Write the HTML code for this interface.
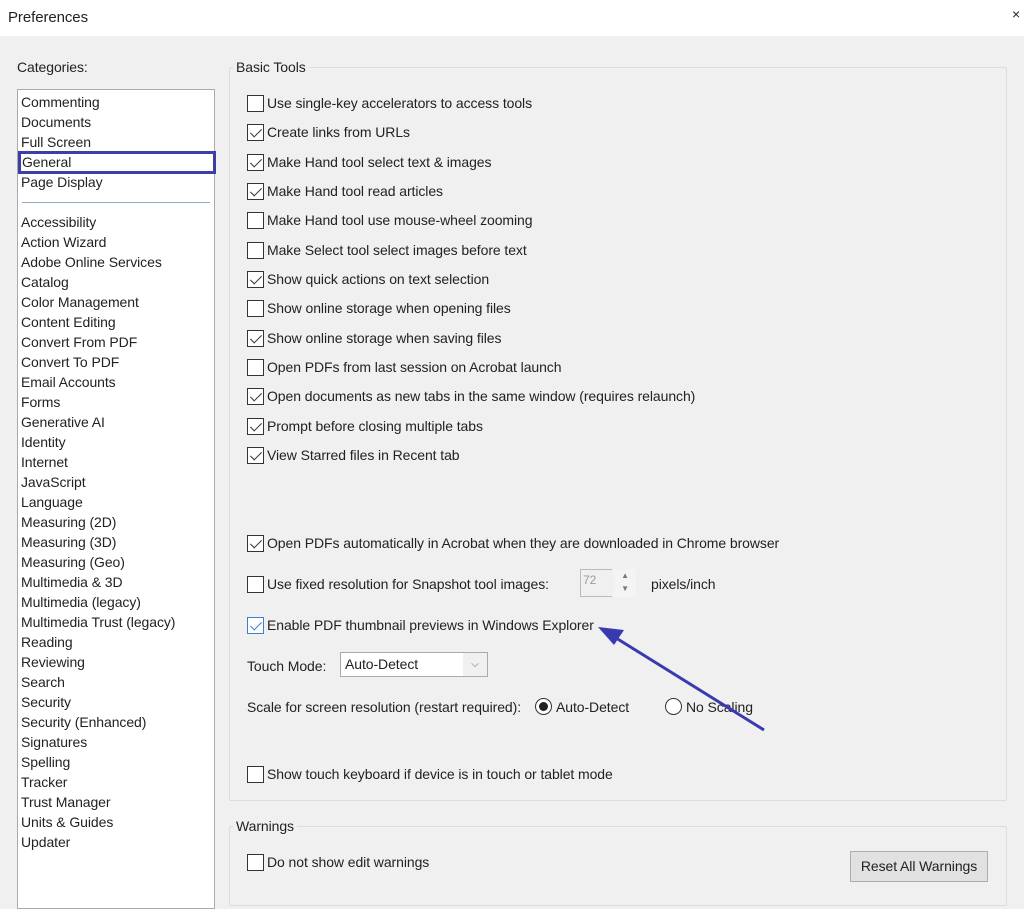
<!DOCTYPE html>
<html><head><style>
*{margin:0;padding:0;box-sizing:border-box}
body{width:1024px;height:894px;overflow:hidden;background:#f0f0f0;font-family:"Liberation Sans",sans-serif;font-size:14px;color:#222;position:relative;letter-spacing:-0.08px}
.a{position:absolute;white-space:nowrap}
.title{position:absolute;left:0;top:0;width:1024px;height:36px;background:#fff}
.list{position:absolute;left:17px;top:89px;width:198px;height:820px;background:#fff;border:1px solid #aaa}
.list div{position:absolute;left:3px;line-height:20px}
.grp{position:absolute;border:1px solid #dcdcdc;border-radius:2px}
.cb{position:absolute;width:17px;height:17px;border:1px solid #333;background:#fff}
.cb.c::after{content:"";position:absolute;left:5px;top:1px;width:5px;height:10px;border:solid #333;border-width:0 1.5px 1.5px 0;transform:rotate(45deg)}
.cb.b{border-color:#3a7fd0}.cb.b::after{border-color:#3a7fd0}
</style></head><body>
<div class="title"></div>
<div class="a" style="left:8px;top:9px;font-size:15px">Preferences</div>
<div class="a" style="left:1012px;top:6px;font-size:14px">×</div>
<div class="a" style="left:17px;top:59px">Categories:</div>
<div class="list">
<div style="top:2px">Commenting</div>
<div style="top:22px">Documents</div>
<div style="top:42px">Full Screen</div>
<div style="top:61px;left:0;width:198px;height:23px;border:3px solid #3c3fa8;padding-left:1px;line-height:17px">General</div>
<div style="top:82px">Page Display</div>
<div style="top:112px;left:4px;width:188px;height:1px;background:#8fa8c8"></div>
<div style="top:122px">Accessibility</div><div style="top:142px">Action Wizard</div><div style="top:162px">Adobe Online Services</div><div style="top:182px">Catalog</div><div style="top:202px">Color Management</div><div style="top:222px">Content Editing</div><div style="top:242px">Convert From PDF</div><div style="top:262px">Convert To PDF</div><div style="top:282px">Email Accounts</div><div style="top:302px">Forms</div><div style="top:322px">Generative AI</div><div style="top:342px">Identity</div><div style="top:362px">Internet</div><div style="top:382px">JavaScript</div><div style="top:402px">Language</div><div style="top:422px">Measuring (2D)</div><div style="top:442px">Measuring (3D)</div><div style="top:462px">Measuring (Geo)</div><div style="top:482px">Multimedia &amp; 3D</div><div style="top:502px">Multimedia (legacy)</div><div style="top:522px">Multimedia Trust (legacy)</div><div style="top:542px">Reading</div><div style="top:562px">Reviewing</div><div style="top:582px">Search</div><div style="top:602px">Security</div><div style="top:622px">Security (Enhanced)</div><div style="top:642px">Signatures</div><div style="top:662px">Spelling</div><div style="top:682px">Tracker</div><div style="top:702px">Trust Manager</div><div style="top:722px">Units &amp; Guides</div><div style="top:742px">Updater</div>
</div>
<div class="grp" style="left:229px;top:67px;width:778px;height:734px"></div>
<div class="a" style="left:233px;top:59px;background:#f0f0f0;padding:0 3px">Basic Tools</div>
<div class="grp" style="left:229px;top:826px;width:778px;height:80px"></div>
<div class="a" style="left:233px;top:818px;background:#f0f0f0;padding:0 3px">Warnings</div>

<div class="cb" style="left:247px;top:95px"></div><div class="a" style="left:267px;top:95px">Use single-key accelerators to access tools</div>
<div class="cb c" style="left:247px;top:124px"></div><div class="a" style="left:267px;top:124px">Create links from URLs</div>
<div class="cb c" style="left:247px;top:154px"></div><div class="a" style="left:267px;top:154px">Make Hand tool select text &amp; images</div>
<div class="cb c" style="left:247px;top:183px"></div><div class="a" style="left:267px;top:183px">Make Hand tool read articles</div>
<div class="cb" style="left:247px;top:212px"></div><div class="a" style="left:267px;top:212px">Make Hand tool use mouse-wheel zooming</div>
<div class="cb" style="left:247px;top:242px"></div><div class="a" style="left:267px;top:242px">Make Select tool select images before text</div>
<div class="cb c" style="left:247px;top:271px"></div><div class="a" style="left:267px;top:271px">Show quick actions on text selection</div>
<div class="cb" style="left:247px;top:300px"></div><div class="a" style="left:267px;top:300px">Show online storage when opening files</div>
<div class="cb c" style="left:247px;top:330px"></div><div class="a" style="left:267px;top:330px">Show online storage when saving files</div>
<div class="cb" style="left:247px;top:359px"></div><div class="a" style="left:267px;top:359px">Open PDFs from last session on Acrobat launch</div>
<div class="cb c" style="left:247px;top:388px"></div><div class="a" style="left:267px;top:388px">Open documents as new tabs in the same window (requires relaunch)</div>
<div class="cb c" style="left:247px;top:418px"></div><div class="a" style="left:267px;top:418px">Prompt before closing multiple tabs</div>
<div class="cb c" style="left:247px;top:447px"></div><div class="a" style="left:267px;top:447px">View Starred files in Recent tab</div>
<div class="cb c" style="left:247px;top:535px"></div><div class="a" style="left:267px;top:535px">Open PDFs automatically in Acrobat when they are downloaded in Chrome browser</div>
<div class="cb" style="left:247px;top:576px"></div><div class="a" style="left:267px;top:576px">Use fixed resolution for Snapshot tool images:</div>
<div class="a" style="left:580px;top:569px;width:32px;height:28px;border:1px solid #bbb;border-right:none;color:#999;font-size:12px;padding:3px 2px">72</div>
<div class="a" style="left:614px;top:569px;width:22px;height:28px;background:#f4f4f4;color:#777;font-size:8px;text-align:center;line-height:13px">▲<br>▼</div>
<div class="a" style="left:651px;top:576px">pixels/inch</div>
<div class="cb c b" style="left:247px;top:617px"></div><div class="a" style="left:267px;top:617px">Enable PDF thumbnail previews in Windows Explorer</div>
<div class="a" style="left:247px;top:658px">Touch Mode:</div>
<div class="a" style="left:340px;top:652px;width:148px;height:25px;border:1px solid #aaa;background:#fff;padding:3px 4px">Auto-Detect<span style="position:absolute;right:0;top:0;width:24px;height:23px;background:#f0f0f0;text-align:center;font-size:10px;color:#666;line-height:23px">⌵</span></div>
<div class="a" style="left:247px;top:699px">Scale for screen resolution (restart required):</div>
<div class="a" style="left:535px;top:698px;width:17px;height:17px;border:1px solid #333;border-radius:50%;background:#fff"><div style="position:absolute;left:3px;top:3px;width:9px;height:9px;border-radius:50%;background:#222"></div></div>
<div class="a" style="left:556px;top:699px">Auto-Detect</div>
<div class="a" style="left:665px;top:698px;width:17px;height:17px;border:1px solid #333;border-radius:50%;background:#fff"></div>
<div class="a" style="left:686px;top:699px">No Scaling</div>
<div class="cb" style="left:247px;top:766px"></div><div class="a" style="left:267px;top:766px">Show touch keyboard if device is in touch or tablet mode</div>
<div class="cb" style="left:247px;top:854px"></div><div class="a" style="left:267px;top:854px">Do not show edit warnings</div>
<div class="a" style="left:850px;top:851px;width:138px;height:31px;border:1px solid #adadad;background:#e1e1e1;text-align:center;line-height:29px">Reset All Warnings</div>
<svg class="a" style="left:0;top:0" width="1024" height="894"><line x1="764" y1="730" x2="608" y2="633" stroke="#3a3ab0" stroke-width="3"/><polygon points="598,627 624,630 614,645" fill="#3a3ab0"/></svg>
</body></html>
